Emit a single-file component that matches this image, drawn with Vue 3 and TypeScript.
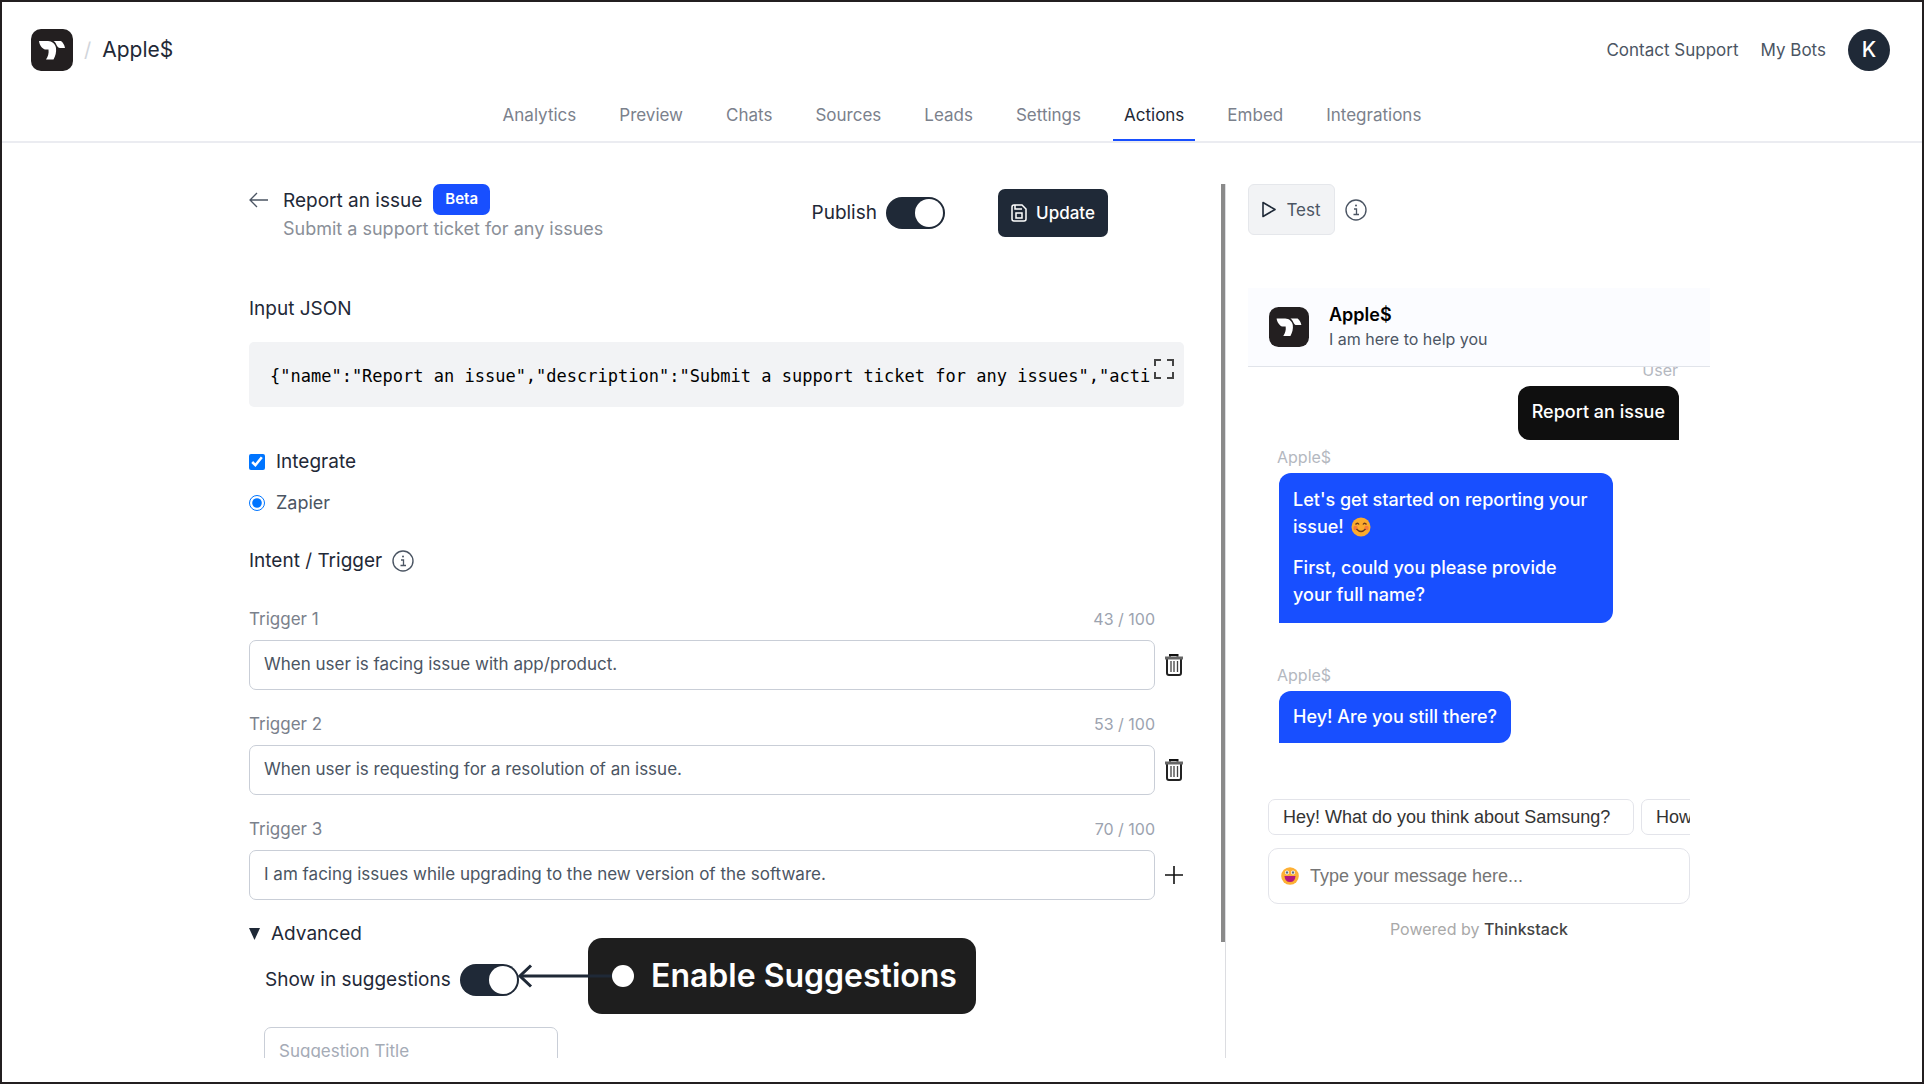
<script setup lang="ts">
import { ref } from 'vue'

interface Trigger {
  id: number
  text: string
  count: number
}

const tabs = ['Analytics', 'Preview', 'Chats', 'Sources', 'Leads', 'Settings', 'Actions', 'Embed', 'Integrations']
const activeTab = ref('Actions')

const json = ref('{"name":"Report an issue","description":"Submit a support ticket for any issues","action":"report"}')
const published = ref(true)
const integrate = ref(true)
const provider = ref('zapier')
const showSuggestions = ref(true)
const suggestionTitle = ref('')
const message = ref('')

const triggers = ref<Trigger[]>([
  { id: 1, text: 'When user is facing issue with app/product.', count: 43 },
  { id: 2, text: 'When user is requesting for a resolution of an issue.', count: 53 },
  { id: 3, text: 'I am facing issues while upgrading to the new version of the software.', count: 70 },
])

const chips = ['Hey! What do you think about Samsung?', 'How can I help?']
</script>

<template>
  <div class="frame">
    <header class="top">
      <div class="bar">
        <div class="crumbs">
          <svg class="logo" viewBox="0 0 42 42" aria-hidden="true">
            <rect width="42" height="42" rx="10" fill="#231f20" />
            <path d="M8 12H17C21 12 24.500 15 25 19C25.500 23 24.500 27 22.500 30.500H15C17 27.500 18 24.500 17.500 20.500H14C11 19.500 8.500 16 8 12Z" fill="#fff" />
            <path d="M22.500 12H30C32 13.500 33.500 16 34 19H29C27.500 19 26.500 18 25.500 16C25 14.500 24 13 22.500 12Z" fill="#fff" />
          </svg>
          <span class="slash">/</span>
          <span class="bot">Apple$</span>
        </div>
        <div class="links">
          <a href="#">Contact Support</a>
          <a href="#">My Bots</a>
          <button class="avatar" type="button">K</button>
        </div>
      </div>
      <nav class="tabs">
        <a v-for="t in tabs" :key="t" href="#" :class="{ active: t === activeTab }" @click.prevent="activeTab = t">{{ t }}</a>
      </nav>
    </header>

    <main class="main">
      <section class="editor">
        <div class="head">
          <button class="icon back" type="button" aria-label="Back">
            <svg width="20" height="16" viewBox="0 0 20 16" fill="none" stroke="#4b5563" stroke-width="1.300"><path d="M19 8H1M8 1L1 8l7 7" /></svg>
          </button>
          <div class="title">
            <div class="title-row">
              <h1>Report an issue</h1>
              <span class="beta">Beta</span>
            </div>
            <p>Submit a support ticket for any issues</p>
          </div>
          <label class="publish">Publish <input v-model="published" class="toggle" type="checkbox" /></label>
          <button class="update" type="button">
            <svg width="16" height="18" viewBox="0 0 16 18" fill="none" stroke="#fff" stroke-width="1.500"><path d="M1 3Q1 1 3 1H11L15 5V15Q15 17 13 17H3Q1 17 1 15Z" /><path d="M4 1V5H11" /><rect x="5" y="9" width="6" height="5" /></svg>
            Update
          </button>
        </div>

        <label class="label" for="json">Input JSON</label>
        <div class="json">
          <input id="json" v-model="json" type="text" spellcheck="false" />
          <button class="icon" type="button" aria-label="Expand">
            <svg width="20" height="20" viewBox="0 0 20 20" fill="none" stroke="#444" stroke-width="2"><path d="M1 7V1H7M13 1H19V7M19 13V19H13M7 19H1V13" /></svg>
          </button>
        </div>

        <label class="option strong"><input v-model="integrate" type="checkbox" />Integrate</label>
        <label class="option"><input v-model="provider" type="radio" name="provider" value="zapier" />Zapier</label>

        <h2 class="intent">
          Intent / Trigger
          <svg class="info" viewBox="0 0 22 22" fill="none" stroke="#4b5563"><circle cx="11" cy="11" r="10" stroke-width="1.400" /><path d="M9 10H11.500V15.500M8.500 15.500H14" stroke-width="1.300" /><circle cx="11" cy="6.500" r="1" fill="#4b5563" stroke="none" /></svg>
        </h2>

        <div v-for="t in triggers" :key="t.id" class="trigger">
          <div class="caption">
            <label :for="'trigger-' + t.id">Trigger {{ t.id }}</label>
            <span>{{ t.count }} / 100</span>
          </div>
          <div class="row">
            <input :id="'trigger-' + t.id" v-model="t.text" class="field" type="text" />
            <button v-if="t.id < 3" class="icon" type="button" aria-label="Delete trigger">
              <svg width="20" height="22" viewBox="0 0 20 22" fill="none"><path d="M3 4V19Q3 21 5 21H15Q17 21 17 19V4" stroke="#222" stroke-width="2" /><path d="M1 4H19" stroke="#666" stroke-width="3" /><path d="M6 2.500V1H13.500V2.500" stroke="#111" stroke-width="2" /><path d="M7 7V18M10 7V18M13.500 7V18" stroke="#444" stroke-width="1.300" /></svg>
            </button>
            <button v-else class="icon" type="button" aria-label="Add trigger">
              <svg width="20" height="20" viewBox="0 0 20 20" stroke="#111" stroke-width="1.600"><path d="M1 10H19M10 1V19" /></svg>
            </button>
          </div>
        </div>

        <button class="advanced" type="button">
          <svg width="11" height="12" viewBox="0 0 11 12"><path d="M0 0H11L5.500 12Z" fill="#1f2937" /></svg>
          Advanced
        </button>
        <div class="suggest">
          <label>Show in suggestions <input v-model="showSuggestions" class="toggle" type="checkbox" /></label>
          <div class="callout">
            <svg class="arrow" width="104" height="24" viewBox="0 0 104 24" fill="none" stroke="#1f2937" stroke-width="3"><path d="M2 12H104" /><path d="M13 1.500L2 12L13 22.500" /></svg>
            <span class="dot"></span>
            Enable Suggestions
          </div>
        </div>
        <input v-model="suggestionTitle" class="field short" type="text" placeholder="Suggestion Title" aria-label="Suggestion Title" />
        <span class="thumb"></span>
      </section>

      <aside class="preview">
        <div class="test-row">
          <button class="test" type="button">
            <svg width="14" height="17" viewBox="0 0 14 17" fill="none" stroke="#1f2937" stroke-width="1.600" stroke-linejoin="round"><path d="M1 1.500L13 8.500L1 15.500Z" /></svg>
            Test
          </button>
          <svg class="info" viewBox="0 0 22 22" fill="none" stroke="#4b5563"><circle cx="11" cy="11" r="10" stroke-width="1.400" /><path d="M9 10H11.500V15.500M8.500 15.500H14" stroke-width="1.300" /><circle cx="11" cy="6.500" r="1" fill="#4b5563" stroke="none" /></svg>
        </div>

        <div class="chat-head">
          <svg class="logo" viewBox="0 0 42 42" aria-hidden="true">
            <rect width="42" height="42" rx="10" fill="#231f20" />
            <path d="M8 12H17C21 12 24.500 15 25 19C25.500 23 24.500 27 22.500 30.500H15C17 27.500 18 24.500 17.500 20.500H14C11 19.500 8.500 16 8 12Z" fill="#fff" />
            <path d="M22.500 12H30C32 13.500 33.500 16 34 19H29C27.500 19 26.500 18 25.500 16C25 14.500 24 13 22.500 12Z" fill="#fff" />
          </svg>
          <div>
            <strong>Apple$</strong>
            <p>I am here to help you</p>
          </div>
        </div>

        <div class="log">
          <span class="who me">User</span>
          <div class="bubble user">Report an issue</div>
          <span class="who">Apple$</span>
          <div class="bubble bot-msg long">
            <p>
              Let's get started on reporting your issue!
              <svg class="smile" viewBox="0 0 20 20"><circle cx="10" cy="10" r="9.500" fill="#fcab2c" /><circle cx="4.500" cy="11" r="2.200" fill="#f77b3b" /><circle cx="15.500" cy="11" r="2.200" fill="#f77b3b" /><path d="M4.500 7.500Q6.500 5 8 7.500M12 7.500Q13.500 5 15.500 7.500M5.500 12Q10 17 14.500 12" fill="none" stroke="#6b3a1e" stroke-width="1.400" /></svg>
            </p>
            <p>First, could you please provide your full name?</p>
          </div>
          <span class="who later">Apple$</span>
          <div class="bubble bot-msg">Hey! Are you still there?</div>
        </div>

        <div class="chips">
          <button v-for="c in chips" :key="c" type="button">{{ c }}</button>
        </div>
        <div class="composer">
          <svg width="18" height="18" viewBox="0 0 18 18"><circle cx="9" cy="9" r="8.800" fill="#fdb035" /><circle cx="6" cy="5.500" r="2" fill="#fff" /><circle cx="12" cy="5.500" r="2" fill="#fff" /><circle cx="6" cy="5.500" r="1.200" fill="#5b6b86" /><circle cx="12" cy="5.500" r="1.200" fill="#5b6b86" /><path d="M3.500 9H14.500Q14 15 9 15Q4 15 3.500 9Z" fill="#b5177b" /></svg>
          <input v-model="message" type="text" placeholder="Type your message here..." aria-label="Message" />
        </div>
        <p class="powered">Powered by <a href="#">Thinkstack</a></p>
      </aside>
    </main>
  </div>
</template>

<style>
body {
  margin: 0;
}
</style>

<style scoped>
* {
  box-sizing: border-box;
  margin: 0;
}
.frame {
  display: flex;
  flex-direction: column;
  height: 100vh;
  padding-bottom: 24px;
  border: 2px solid #231f20;
  background: #fff;
  color: #1f2937;
  font: 400 18px/24px Inter, "Liberation Sans", sans-serif;
  overflow: hidden;
}
button,
input {
  font: inherit;
  color: inherit;
}
button {
  padding: 0;
  border: 0;
  background: none;
}
a {
  color: inherit;
  text-decoration: none;
}
svg {
  flex: none;
}
.top {
  border-bottom: 2px solid #ebecf1;
}
.bar {
  display: flex;
  justify-content: space-between;
  align-items: center;
  height: 95px;
  padding: 0 32px 0 29px;
}
.crumbs,
.links {
  display: flex;
  align-items: center;
}
.crumbs .logo {
  width: 42px;
  height: 42px;
}
.slash {
  margin: 0 11px;
  color: #d1d5db;
  font-size: 20px;
}
.bot {
  font-size: 21px;
}
.links {
  gap: 22px;
  color: #4b5563;
  font-size: 17px;
}
.avatar {
  width: 42px;
  height: 42px;
  border-radius: 50%;
  background: #1f2937;
  color: #fff;
  font-size: 21px;
  font-weight: 500;
}
.tabs {
  display: flex;
  justify-content: center;
  gap: 21px;
}
.tabs a {
  height: 44px;
  padding: 6px 11px 0;
  border-bottom: 2px solid transparent;
  color: #7b818c;
  font-size: 17px;
}
.tabs a.active {
  border-color: #184fff;
  color: #1f2937;
}
.main {
  display: flex;
  flex: 1;
  width: 100%;
  max-width: 1496px;
  min-height: 0;
  margin: 41px auto 0;
}
.editor {
  position: relative;
  flex: 1;
  min-width: 0;
  padding: 0 41px 0 35px;
  border-right: 1px solid #dcdde1;
  overflow: hidden;
}
.thumb {
  position: absolute;
  top: 0;
  right: 0;
  width: 4px;
  height: 758px;
  background: #8a8a8a;
}
.head {
  display: flex;
  align-items: flex-start;
  height: 56px;
  padding-right: 76px;
}
.icon {
  display: grid;
  place-items: center;
}
.back {
  height: 31px;
  margin-right: 14px;
}
.title {
  flex: 1;
}
.title-row {
  display: flex;
  gap: 11px;
}
h1 {
  font-size: 19px;
  font-weight: 400;
  line-height: 33px;
}
.beta {
  height: 31px;
  padding: 0 12px;
  border-radius: 7px;
  background: #184fff;
  color: #fff;
  font-size: 15px;
  font-weight: 600;
  line-height: 29px;
}
.title p {
  color: #8a8f98;
}
.publish {
  display: flex;
  align-items: center;
  gap: 9px;
  height: 58px;
  margin-right: 53px;
  font-size: 19px;
}
.toggle {
  appearance: none;
  width: 59px;
  height: 32px;
  margin: 0;
  padding: 2px;
  border-radius: 16px;
  background: #1f2937;
}
.toggle::before {
  content: "";
  display: block;
  width: 28px;
  height: 28px;
  border-radius: 50%;
  background: #fff;
}
.toggle:checked::before {
  margin-left: 27px;
}
.update {
  display: flex;
  justify-content: center;
  align-items: center;
  gap: 9px;
  width: 110px;
  height: 48px;
  margin-top: 5px;
  border-radius: 7px;
  background: #1f2937;
  color: #fff;
  font-size: 17px;
  font-weight: 500;
}
.label {
  display: block;
  margin-top: 57px;
  font-size: 19px;
}
.json {
  display: flex;
  align-items: flex-start;
  gap: 3px;
  height: 65px;
  margin-top: 21px;
  padding: 17px 10px 0 21px;
  border-radius: 5px;
  background: #f2f3f5;
}
.json input {
  flex: 1;
  min-width: 0;
  height: 34px;
  padding: 0;
  border: 0;
  background: none;
  color: #000;
  font: 17px/34px "DejaVu Sans Mono", monospace;
}
.option {
  display: flex;
  align-items: center;
  gap: 11px;
  margin-top: 17px;
  color: #4b5563;
}
.option.strong {
  margin-top: 43px;
  color: inherit;
  font-size: 19px;
}
.option input {
  width: 16px;
  height: 16px;
  margin: 0;
  accent-color: #0075ff;
}
.intent {
  display: flex;
  align-items: center;
  gap: 10px;
  margin: 34px 0;
  font-size: 19px;
  font-weight: 400;
}
.info {
  width: 22px;
  height: 22px;
}
.trigger {
  margin-bottom: 22px;
}
.caption {
  display: flex;
  justify-content: space-between;
  margin: 0 29px 9px 0;
  color: #7b818c;
  font-size: 17px;
}
.caption span {
  color: #9ca3af;
  font-size: 16px;
}
.row {
  display: flex;
  gap: 9px;
}
.field {
  width: 100%;
  min-width: 0;
  height: 50px;
  padding: 0 14px 2px;
  border: 1px solid #c9ced7;
  border-radius: 7px;
  background: none;
  color: #4b5563;
  font-size: 17px;
}
.field::placeholder {
  color: #a5abb6;
}
.advanced {
  display: flex;
  align-items: center;
  gap: 11px;
  font-size: 19px;
}
.suggest {
  position: relative;
  width: max-content;
  margin: 18px 0 31px 16px;
}
.suggest label {
  display: flex;
  align-items: center;
  gap: 9px;
  font-size: 19px;
}
.callout {
  position: absolute;
  top: -26px;
  left: 323px;
  display: flex;
  align-items: center;
  gap: 17px;
  height: 76px;
  padding: 0 19px 0 24px;
  border-radius: 14px;
  background: #1e1e1e;
  color: #fff;
  font-size: 32px;
  font-weight: 600;
  white-space: nowrap;
}
.arrow {
  position: absolute;
  left: -70px;
}
.dot {
  position: relative;
  width: 22px;
  height: 22px;
  border-radius: 50%;
  background: #fff;
}
.short {
  width: 294px;
  margin-left: 15px;
}
.preview {
  width: 484px;
  padding-left: 22px;
}
.test-row {
  display: flex;
  align-items: center;
  gap: 10px;
}
.test {
  display: flex;
  justify-content: center;
  align-items: center;
  gap: 10px;
  width: 87px;
  height: 51px;
  border: 1px solid #e5e7eb;
  border-radius: 6px;
  background: #f2f3f5;
  color: #4b5563;
  font-size: 17px;
}
.chat-head {
  display: flex;
  align-items: center;
  gap: 20px;
  height: 79px;
  margin-top: 53px;
  padding: 0 21px;
  border-bottom: 1px solid #e1e4ea;
  background: #fbfcff;
}
.chat-head .logo {
  width: 40px;
  height: 40px;
}
.chat-head strong {
  display: block;
  color: #000;
  font-weight: 600;
}
.chat-head p {
  color: #4b5563;
  font-size: 16px;
}
.log {
  display: flex;
  flex-direction: column;
  align-items: flex-start;
  height: 432px;
  padding: 0 31px;
  overflow: hidden;
}
.who {
  margin: 5px 0 4px -2px;
  color: #b4b8bf;
  font-size: 16px;
}
.who.me {
  align-self: flex-end;
  margin: -9px 1px 4px;
}
.who.later {
  margin-top: 40px;
}
.bubble {
  padding: 14px;
  border-radius: 12px 12px 12px 0;
  color: #fff;
  font-weight: 500;
}
.user {
  align-self: flex-end;
  height: 54px;
  border-radius: 12px 12px 0;
  background: #0f0f0f;
}
.bot-msg {
  background: #184fff;
}
.long {
  width: 334px;
  padding: 13px 14px 15px;
  line-height: 27px;
}
.long p + p {
  margin-top: 14px;
}
.smile {
  width: 20px;
  height: 20px;
  margin-left: 2px;
  vertical-align: -4px;
}
.chips {
  display: flex;
  gap: 7px;
  margin: 0 20px;
  overflow: hidden;
}
.chips button {
  flex: none;
  min-width: 366px;
  height: 36px;
  padding: 0 14px;
  border: 1px solid #e3e4ea;
  border-radius: 7px;
  color: #333;
  font-family: "Liberation Sans", Arial, sans-serif;
  text-align: left;
}
.composer {
  display: flex;
  align-items: center;
  gap: 11px;
  height: 56px;
  margin: 13px 20px;
  padding: 0 12px;
  border: 1px solid #e3e4ea;
  border-radius: 10px;
}
.composer input {
  flex: 1;
  min-width: 0;
  padding: 0;
  border: 0;
  background: none;
  font-family: "Liberation Sans", Arial, sans-serif;
}
.composer input::placeholder {
  color: #757575;
}
.powered {
  color: #a9a9a9;
  font-size: 16px;
  text-align: center;
}
.powered a {
  color: #444;
  font-weight: 500;
}
</style>
